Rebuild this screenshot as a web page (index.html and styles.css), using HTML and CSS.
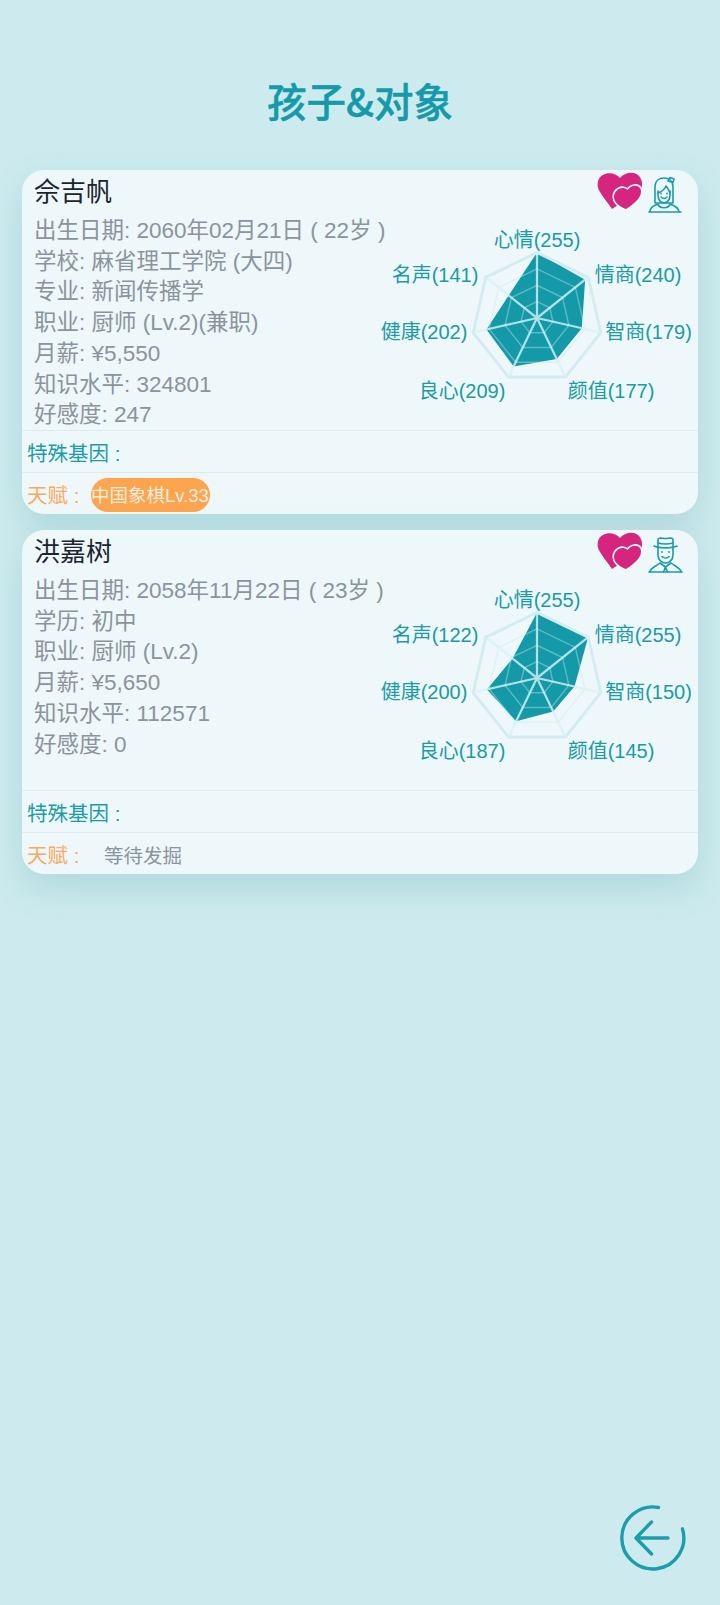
FILE: index.html
```html
<!DOCTYPE html>
<html lang="zh">
<head>
<meta charset="utf-8">
<title>孩子&amp;对象</title>
<link rel="stylesheet" href="styles.css">
</head>
<body>
<main class="page">
  <h1 class="title">孩子&amp;对象</h1>
  <section class="cards">
    <article class="card">
      <div class="main">
        <div class="name">佘吉帆</div>
        <ul class="info">
          <li>出生日期: 2060年02月21日 ( 22岁 )</li>
          <li>学校: 麻省理工学院 (大四)</li>
          <li>专业: 新闻传播学</li>
          <li>职业: 厨师 (Lv.2)(兼职)</li>
          <li>月薪: ¥5,550</li>
          <li>知识水平: 324801</li>
          <li>好感度: 247</li>
        </ul>
      </div>
      <div class="badges">
        <svg class="hearts" viewBox="0 0 60 60"><path class="h" d="M30 13C34 8 43 6 48 10C53 14 53 22 50 26L36 30L28 40L22 44C18 38 13 32 10 27C6 21 7 13 13 10C18 7 26 8 30 13Z"/><path class="h2" d="M37.5 25C41 20 48 19 50.5 24C53 30 47 37 36 44C31 42 24 38 24 32C24 25 32 20 37.5 25Z"/></svg>
        <svg class="person" viewBox="0 0 36 38"><path d="M7 27V11C7 5 11 2 16 2C21 2 25 5 25 11V27Z"/><path d="M10 17C13 16 17 13 18 10C20 12 21 15 22 17"/><path d="M10 15V19C10 24 13 27 16 27C19 27 22 24 22 19V15"/><path d="M13 21C15 23 17 23 19 21"/><path d="M2 36C2 31 6 30 10 28C11 33 21 33 22 28C26 30 31 31 31 36"/><path d="M1 36H33"/><path d="M20 5L22 1.5L26 3L25 6.5Z"/><circle class="dot" cx="13" cy="17.5" r=".9"/><circle class="dot" cx="19" cy="17.5" r=".9"/></svg>
      </div>
      <svg class="radar" viewBox="-160 -100 320 240">
        <g class="plot">
          <polygon class="data" points="0,-64 47.1,-37.5 43.8,10 19.3,40 -22.8,47.3 -49.4,11.3 -27.7,-22.1"/>
          <polygon class="ring" points="0,-16 12.5,-10 15.6,3.6 7,14.4 -7,14.4 -15.6,3.6 -12.5,-10"/>
          <polygon class="ring" points="0,-32 25,-20 31.2,7.1 13.9,28.8 -13.9,28.8 -31.2,7.1 -25,-20"/>
          <polygon class="ring" points="0,-48 37.5,-29.9 46.8,10.7 20.8,43.3 -20.8,43.3 -46.8,10.7 -37.5,-29.9"/>
          <polygon class="ring-outer" points="0,-64 50,-39.9 62.4,14.2 27.8,57.7 -27.8,57.7 -62.4,14.2 -50,-39.9"/>
          <path class="spokes" d="M0 0L0 -64M0 0L50 -39.9M0 0L62.4 14.2M0 0L27.8 57.7M0 0L-27.8 57.7M0 0L-62.4 14.2M0 0L-50 -39.9"/>
        </g>
        <text x="0" y="-71.5">心情(255)</text>
        <text x="101" y="-36.5">情商(240)</text>
        <text x="111.5" y="21">智商(179)</text>
        <text x="74" y="80">颜值(177)</text>
        <text x="-75" y="80">良心(209)</text>
        <text x="-113" y="21">健康(202)</text>
        <text x="-102" y="-36.5">名声(141)</text>
      </svg>
      <div class="row gene">特殊基因 :</div>
      <div class="row talent"><span class="talent-label">天赋 :</span><span class="pill">中国象棋Lv.33</span></div>
    </article>

    <article class="card">
      <div class="main">
        <div class="name">洪嘉树</div>
        <ul class="info">
          <li>出生日期: 2058年11月22日 ( 23岁 )</li>
          <li>学历: 初中</li>
          <li>职业: 厨师 (Lv.2)</li>
          <li>月薪: ¥5,650</li>
          <li>知识水平: 112571</li>
          <li>好感度: 0</li>
        </ul>
      </div>
      <div class="badges">
        <svg class="hearts" viewBox="0 0 60 60"><path class="h" d="M30 13C34 8 43 6 48 10C53 14 53 22 50 26L36 30L28 40L22 44C18 38 13 32 10 27C6 21 7 13 13 10C18 7 26 8 30 13Z"/><path class="h2" d="M37.5 25C41 20 48 19 50.5 24C53 30 47 37 36 44C31 42 24 38 24 32C24 25 32 20 37.5 25Z"/></svg>
        <svg class="person" viewBox="0 0 36 38"><path d="M6 10C11 12.5 24 12.5 29 10"/><path d="M10 10.5V4C10 1 14 2.5 17.5 2.5C21 2.5 25 1 25 4V10.5"/><path d="M10 7C14 8 21 8 25 7"/><path d="M10 12V19C10 24 14 27 17.5 27C21 27 25 24 25 19V12"/><path d="M14 20.5C16 22.5 19 22.5 21 20.5"/><path d="M2 36C2 32 7 31 12 27L17.5 31L23 27C28 31 33 32 33 36"/><path d="M1 36H34"/><path d="M17.5 31L15.5 36M17.5 31L19.5 36"/><circle class="dot" cx="14" cy="16" r=".9"/><circle class="dot" cx="21" cy="16" r=".9"/></svg>
      </div>
      <svg class="radar" viewBox="-160 -100 320 240">
        <g class="plot">
          <polygon class="data" points="0,-64 50,-39.9 36.7,8.4 15.8,32.8 -20.4,42.3 -48.9,11.2 -23.9,-19.1"/>
          <polygon class="ring" points="0,-16 12.5,-10 15.6,3.6 7,14.4 -7,14.4 -15.6,3.6 -12.5,-10"/>
          <polygon class="ring" points="0,-32 25,-20 31.2,7.1 13.9,28.8 -13.9,28.8 -31.2,7.1 -25,-20"/>
          <polygon class="ring" points="0,-48 37.5,-29.9 46.8,10.7 20.8,43.3 -20.8,43.3 -46.8,10.7 -37.5,-29.9"/>
          <polygon class="ring-outer" points="0,-64 50,-39.9 62.4,14.2 27.8,57.7 -27.8,57.7 -62.4,14.2 -50,-39.9"/>
          <path class="spokes" d="M0 0L0 -64M0 0L50 -39.9M0 0L62.4 14.2M0 0L27.8 57.7M0 0L-27.8 57.7M0 0L-62.4 14.2M0 0L-50 -39.9"/>
        </g>
        <text x="0" y="-71.5">心情(255)</text>
        <text x="101" y="-36.5">情商(255)</text>
        <text x="111.5" y="21">智商(150)</text>
        <text x="74" y="80">颜值(145)</text>
        <text x="-75" y="80">良心(187)</text>
        <text x="-113" y="21">健康(200)</text>
        <text x="-102" y="-36.5">名声(122)</text>
      </svg>
      <div class="row gene">特殊基因 :</div>
      <div class="row talent"><span class="talent-label">天赋 :</span><span class="pending">等待发掘</span></div>
    </article>
  </section>
  <footer class="footer">
    <svg class="back" viewBox="0 0 70 70"><path d="M40.5 4.5A31 31 0 1 0 64.5 26"/><path d="M18 35H50M33.5 19L18 35L33.5 51"/></svg>
  </footer>
</main>
</body>
</html>
```

FILE: styles.css
```css
* { box-sizing: border-box; }
html, body { margin: 0; padding: 0; }
body {
  background: #cdebee;
  font-family: "Liberation Sans", "Noto Sans CJK SC", sans-serif;
}
.page {
  min-height: 1605px;
  display: flex;
  flex-direction: column;
}
.title {
  margin: 0;
  padding-top: 72px;
  height: 170px;
  text-align: center;
  font-family: "Noto Sans CJK SC", sans-serif;
  font-size: 39.5px;
  line-height: 56px;
  font-weight: 500;
  -webkit-text-stroke: .5px #149aaa;
  color: #149aaa;
}
.cards {
  display: flex;
  flex-direction: column;
  gap: 16px;
  padding: 0 22px;
}
.card {
  position: relative;
  background: #eef7fa;
  border-radius: 22px;
  box-shadow: 0 14px 36px rgba(20, 120, 130, .16);
  overflow: hidden;
}
.main {
  height: 260px;
  padding: 1px 0 0 12px;
}
.name {
  height: 42px;
  font-size: 26px;
  line-height: 42px;
  color: #1b2530;
}
.info {
  list-style: none;
  margin: 3px 0 0;
  padding: 0;
  font-size: 22.5px;
  line-height: 30.7px;
  color: #8b949c;
}
.badges {
  position: absolute;
  top: -5px;
  right: 0;
  width: 108px;
  height: 60px;
}
.hearts {
  position: absolute;
  left: 0;
  top: 0;
  width: 60px;
  height: 60px;
}
.h { fill: #d6257f; }
.h2 {
  fill: #d6257f;
  stroke: #eef7fa;
  stroke-width: 3.2;
  paint-order: stroke;
}
.person {
  position: absolute;
  left: 58px;
  top: 11px;
  width: 36px;
  height: 38px;
  fill: none;
  stroke: #1c9aa8;
  stroke-width: 1.6;
  stroke-linecap: round;
  stroke-linejoin: round;
}
.person .dot { fill: #1c9aa8; stroke: none; }
.radar {
  position: absolute;
  left: 355px;
  top: 47.5px;
  width: 320px;
  height: 240px;
}
.radar text {
  font-size: 20px;
  fill: #1a9ba6;
  text-anchor: middle;
}
.plot { transform: scale(1.023); }
.data { fill: #1499a8; }
.ring {
  fill: none;
  stroke: rgba(200, 232, 237, .4);
  stroke-width: 1.4;
}
.ring-outer {
  fill: none;
  stroke: #d2ecef;
  stroke-width: 2.8;
}
.spokes {
  fill: none;
  stroke: rgba(215, 242, 245, .8);
  stroke-width: 2.2;
}
.row {
  height: 42px;
  border-top: 1px solid #deebee;
  padding-left: 5px;
  display: flex;
  align-items: center;
  font-size: 20.5px;
}
.gene { color: #1a9ba6; }
.talent-label {
  width: 64px;
  flex: none;
  color: #f7ab5c;
}
.pill {
  width: 119px;
  height: 34px;
  margin-top: 2px;
  padding-top: 3px;
  border-radius: 17px;
  background: #fda44e;
  color: #fbeede;
  font-size: 18.5px;
  line-height: 29px;
  white-space: nowrap;
}
.pending {
  padding: 1px 0 0 13px;
  font-size: 19.5px;
  color: #8b949c;
}
.footer {
  margin-top: auto;
  display: flex;
  justify-content: flex-end;
  padding: 0 32px 32px 0;
}
.back {
  width: 70px;
  height: 70px;
  fill: none;
  stroke: #1a9eaa;
  stroke-width: 3.4;
  stroke-linecap: round;
  stroke-linejoin: round;
}
```
